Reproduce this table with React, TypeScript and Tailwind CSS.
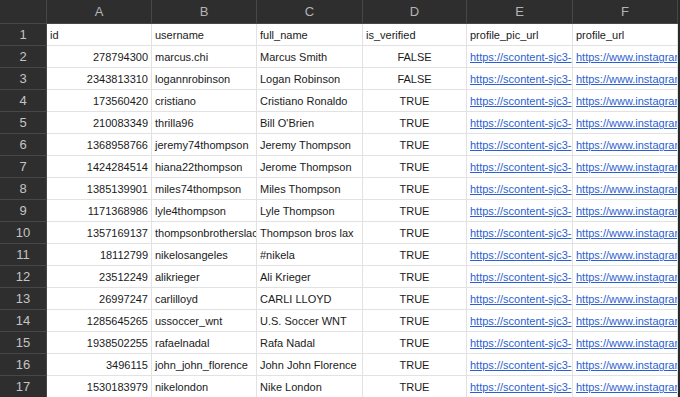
import React from 'react';

const cols = ['A', 'B', 'C', 'D', 'E', 'F'];

const rows: [string, string, string, string][] = [
  ['278794300', 'marcus.chi', 'Marcus Smith', 'FALSE'],
  ['2343813310', 'logannrobinson', 'Logan Robinson', 'FALSE'],
  ['173560420', 'cristiano', 'Cristiano Ronaldo', 'TRUE'],
  ['210083349', 'thrilla96', "Bill O'Brien", 'TRUE'],
  ['1368958766', 'jeremy74thompson', 'Jeremy Thompson', 'TRUE'],
  ['1424284514', 'hiana22thompson', 'Jerome Thompson', 'TRUE'],
  ['1385139901', 'miles74thompson', 'Miles Thompson', 'TRUE'],
  ['1171368986', 'lyle4thompson', 'Lyle Thompson', 'TRUE'],
  ['1357169137', 'thompsonbrotherslacrosse', 'Thompson bros lax', 'TRUE'],
  ['18112799', 'nikelosangeles', '#nikela', 'TRUE'],
  ['23512249', 'alikrieger', 'Ali Krieger', 'TRUE'],
  ['26997247', 'carlilloyd', 'CARLI LLOYD', 'TRUE'],
  ['1285645265', 'ussoccer_wnt', 'U.S. Soccer WNT', 'TRUE'],
  ['1938502255', 'rafaelnadal', 'Rafa Nadal', 'TRUE'],
  ['3496115', 'john_john_florence', 'John John Florence', 'TRUE'],
  ['1530183979', 'nikelondon', 'Nike London', 'TRUE'],
];

const cell = 'h-[22px] border-r border-b border-[#e2e2e2] bg-white px-[3px] pt-[2px] flex items-center overflow-hidden whitespace-nowrap text-[11px] text-[#1a1a1a]';
const rowHead = 'h-[22px] border-r border-b border-[#474747] bg-[#2e2e2e] pt-[1px] flex items-center justify-center text-[13px] text-[#c4c4c4]';
const link = 'text-[#2b5fd1] underline';

export default function App() {
  return (
    <div className="w-[680px] h-[397px] overflow-hidden bg-white border-r-2 border-[#2a2a2a]" style={{ fontFamily: '"Liberation Sans", Arial, sans-serif' }}>
      <div className="grid grid-cols-[47px_105px_105px_106px_104px_106px_105px]">
        <div className="h-[24px] border-r border-b border-[#474747] bg-[#2e2e2e]" />
        {cols.map((c) => (
          <div key={c} className="h-[24px] border-r border-b border-[#474747] bg-[#2e2e2e] pt-[1px] flex items-center justify-center text-[13px] text-[#b4b4b4]">
            {c}
          </div>
        ))}

        <div className={rowHead}>1</div>
        <div className={cell}>id</div>
        <div className={cell}>username</div>
        <div className={cell}>full_name</div>
        <div className={cell}>is_verified</div>
        <div className={cell}>profile_pic_url</div>
        <div className={cell}>profile_url</div>

        {rows.map((r, i) => (
          <React.Fragment key={r[0]}>
            <div className={rowHead}>{i + 2}</div>
            <div className={`${cell} justify-end`}>{r[0]}</div>
            <div className={cell}>{r[1]}</div>
            <div className={cell}>{r[2]}</div>
            <div className={`${cell} justify-center`}>{r[3]}</div>
            <div className={cell}><span className={link}>https://scontent-sjc3-</span></div>
            <div className={cell}><span className={link}>https://www.instagram.com/{r[1]}/</span></div>
          </React.Fragment>
        ))}
      </div>
    </div>
  );
}
